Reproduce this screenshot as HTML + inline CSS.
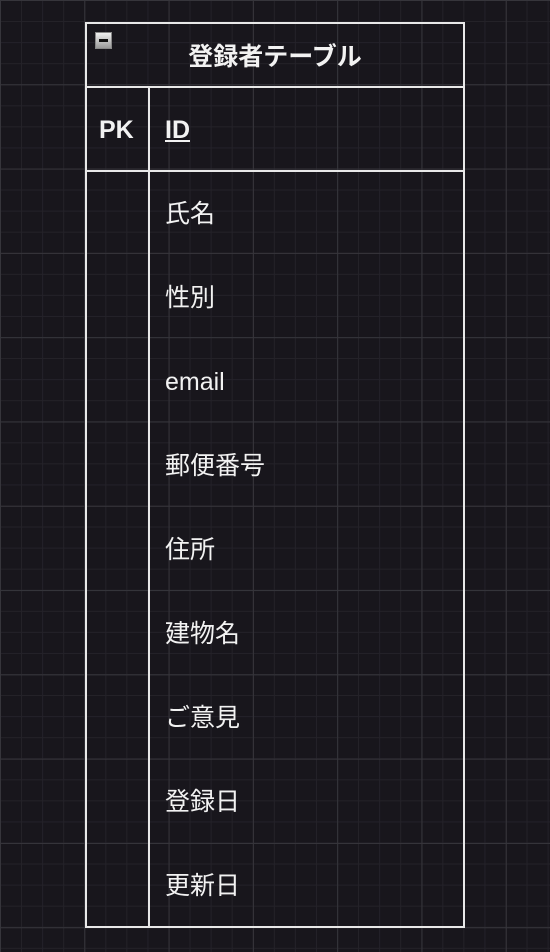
<!DOCTYPE html>
<html><head><meta charset="utf-8"><style>
html,body{margin:0;padding:0}
body{width:550px;height:952px;overflow:hidden;background-color:#18161c;
background-image:
linear-gradient(to right,#36353b 1px,transparent 1px),
linear-gradient(to bottom,#36353b 1px,transparent 1px),
linear-gradient(to right,#242229 1px,transparent 1px),
linear-gradient(to bottom,#242229 1px,transparent 1px);
background-size:84.3px 84.3px,84.3px 84.3px,21.075px 21.075px,21.075px 21.075px;
font-family:"Liberation Sans","Noto Sans CJK JP",sans-serif;color:#f2f2f2;position:relative}
.box{position:absolute;left:85px;top:22px;width:376px;height:902px;border:2px solid #e8e8e8}
.hl{position:absolute;left:0;width:376px;height:2px;background:#e8e8e8}
.vl{position:absolute;left:61px;top:64px;width:2px;height:838px;background:#e8e8e8}
.t{position:absolute;font-size:25px;left:78px;line-height:30px}
.title{position:absolute;top:18px;left:0;width:376px;text-align:center;font-size:25px;font-weight:bold;line-height:30px}
.btn{position:absolute;left:8px;top:8px;width:17px;height:17px;background:linear-gradient(#f0f0f0,#9a9a9a);border:1px solid #888;box-sizing:border-box}
.btn:after{content:"";position:absolute;left:3px;top:6px;width:9px;height:3px;background:#111}
</style></head><body>
<div class="box">
<div class="btn"></div>
<div class="title">登録者テーブル</div>
<div class="hl" style="top:62px"></div>
<div class="hl" style="top:146px"></div>
<div class="vl"></div>
<div class="t" style="left:12px;top:91px;font-weight:bold">PK</div>
<div class="t" style="top:91px;font-weight:bold;text-decoration:underline">ID</div>
<div class="t" style="top:175px">氏名</div>
<div class="t" style="top:259px">性別</div>
<div class="t" style="top:343px">email</div>
<div class="t" style="top:427px">郵便番号</div>
<div class="t" style="top:511px">住所</div>
<div class="t" style="top:595px">建物名</div>
<div class="t" style="top:679px">ご意見</div>
<div class="t" style="top:763px">登録日</div>
<div class="t" style="top:847px">更新日</div>
</div>
</body></html>
